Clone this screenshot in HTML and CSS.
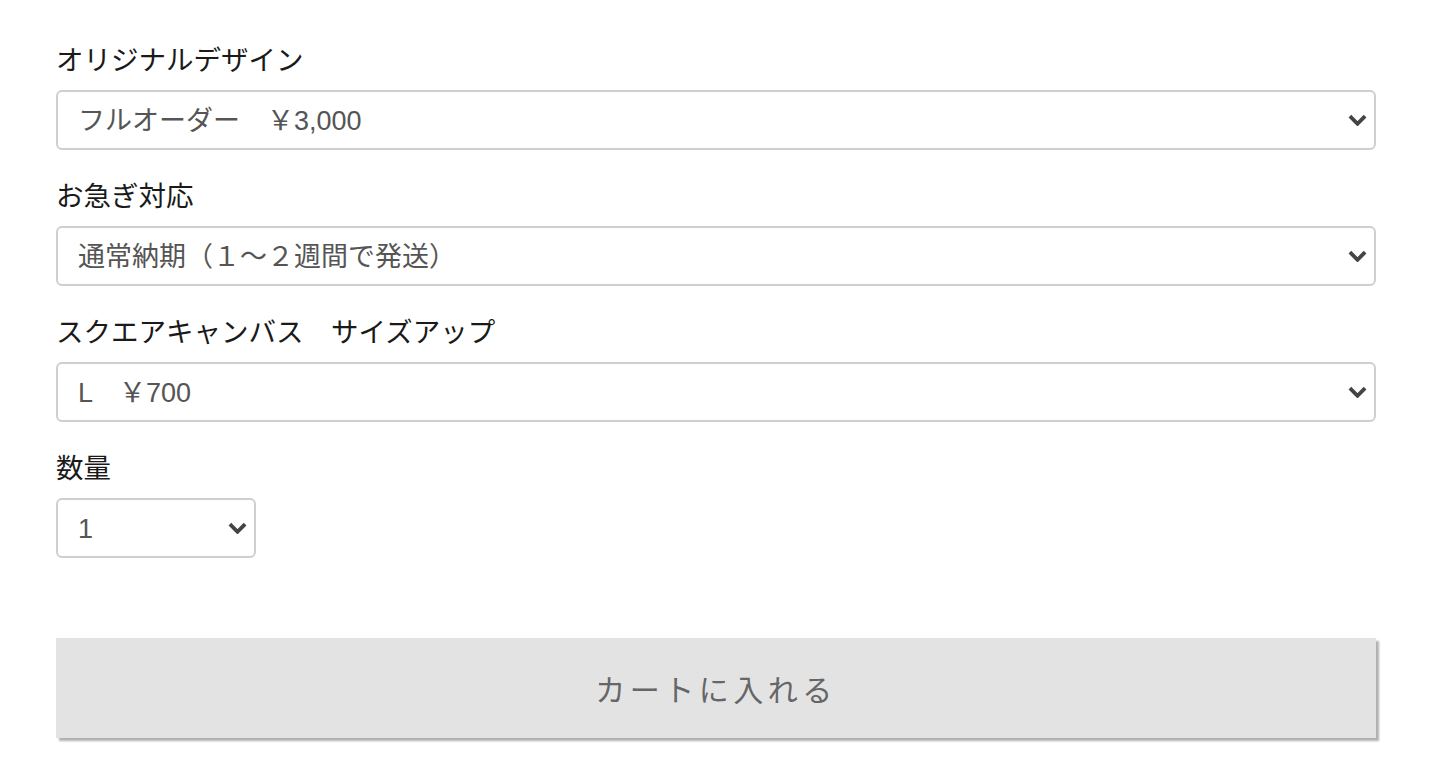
FILE: index.html
```html
<!DOCTYPE html>
<html lang="ja">
<head>
    <meta charset="UTF-8">
    <meta name="viewport" content="width=device-width, initial-scale=1.0">
    <title>オプション選択</title>
    <link rel="stylesheet" href="styles.css">
</head>
<body>

    <form class="options">
        <!-- デザイン -->
        <div class="field">
            <label for="design">オリジナルデザイン</label>
            <div class="select-wrap">
                <select id="design">
                    <option>フルオーダー　￥3,000</option>
                </select>
                <svg class="chevron" viewBox="0 0 20 12"><path d="M2 2 L10 10 L18 2"/></svg>
            </div>
        </div>

        <!-- 納期 -->
        <div class="field">
            <label for="rush">お急ぎ対応</label>
            <div class="select-wrap">
                <select id="rush">
                    <option>通常納期（１～２週間で発送）</option>
                </select>
                <svg class="chevron" viewBox="0 0 20 12"><path d="M2 2 L10 10 L18 2"/></svg>
            </div>
        </div>

        <!-- サイズ -->
        <div class="field">
            <label for="size">スクエアキャンバス　サイズアップ</label>
            <div class="select-wrap">
                <select id="size">
                    <option>L　￥700</option>
                </select>
                <svg class="chevron" viewBox="0 0 20 12"><path d="M2 2 L10 10 L18 2"/></svg>
            </div>
        </div>

        <!-- 数量 -->
        <div class="field">
            <label for="qty">数量</label>
            <div class="select-wrap qty">
                <select id="qty">
                    <option>1</option>
                    <option>2</option>
                    <option>3</option>
                </select>
                <svg class="chevron" viewBox="0 0 20 12"><path d="M2 2 L10 10 L18 2"/></svg>
            </div>
        </div>

        <button type="button" class="cart-btn">カートに入れる</button>
    </form>

</body>
</html>
```

FILE: styles.css
```css
body {
    margin: 0;
    padding-bottom: 30px;
    background: #fff;
    font-family: "Liberation Sans", "Noto Sans CJK JP", sans-serif;
    color: #222;
    text-spacing-trim: space-all;
}

.options {
    width: 1320px;
    padding: 41px 0 0 56px;
    display: flex;
    flex-direction: column;
}

.field {
    display: flex;
    flex-direction: column;
    gap: 10px;
    margin-bottom: 27px;
}

.field label {
    font-size: 27.5px;
    line-height: 39px;
    color: #1a1a1a;
}

.select-wrap {
    position: relative;
    height: 60px;
}

.select-wrap.qty {
    width: 200px;
}

.select-wrap select {
    appearance: none;
    -webkit-appearance: none;
    width: 100%;
    height: 60px;
    box-sizing: border-box;
    border: 2px solid #cfcfcf;
    border-radius: 6px;
    background: #fff;
    padding: 2px 50px 0 20px;
    font-family: inherit;
    font-size: 27px;
    color: #555;
    outline: none;
    text-spacing-trim: space-all;
}

.chevron {
    position: absolute;
    right: 9px;
    top: 24px;
    width: 19px;
    height: 12px;
    fill: none;
    stroke: #444;
    stroke-width: 4;
    pointer-events: none;
}

.cart-btn {
    margin-top: 53px;
    width: 1320px;
    height: 100px;
    border: none;
    background: #e3e3e3;
    box-shadow: 3px 3px 2px #b0b0b0;
    font-family: inherit;
    font-size: 30px;
    letter-spacing: 4.5px;
    color: #666;
    cursor: pointer;
}
```
